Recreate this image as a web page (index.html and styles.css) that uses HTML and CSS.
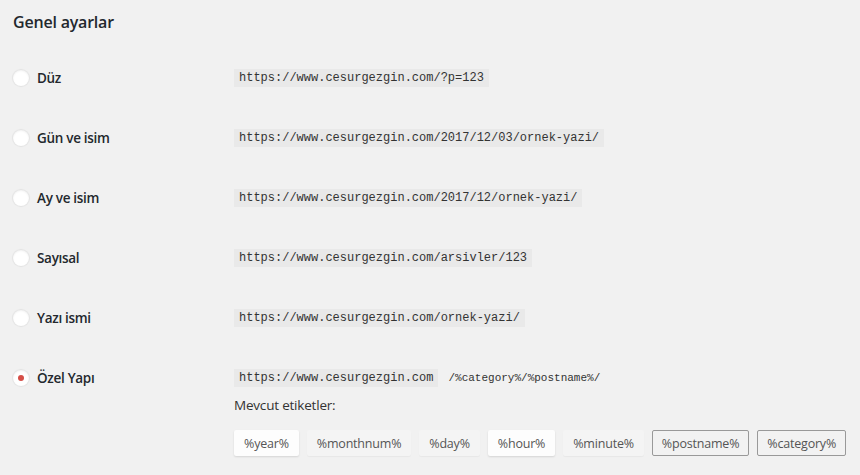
FILE: index.html
```html
<!DOCTYPE html>
<html lang="tr">
<head>
<meta charset="utf-8">
<link rel="stylesheet" href="styles.css">
</head>
<body>
<div class="wrap">
  <h2 class="title">Genel ayarlar</h2>
  <div class="rows">
    <div class="row">
      <label class="opt"><span class="radio"></span>Düz</label>
      <div class="val"><code>https://www.cesurgezgin.com/?p=123</code></div>
    </div>
    <div class="row">
      <label class="opt"><span class="radio"></span>Gün ve isim</label>
      <div class="val"><code>https://www.cesurgezgin.com/2017/12/03/ornek-yazi/</code></div>
    </div>
    <div class="row">
      <label class="opt"><span class="radio"></span>Ay ve isim</label>
      <div class="val"><code>https://www.cesurgezgin.com/2017/12/ornek-yazi/</code></div>
    </div>
    <div class="row">
      <label class="opt"><span class="radio"></span>Sayısal</label>
      <div class="val"><code>https://www.cesurgezgin.com/arsivler/123</code></div>
    </div>
    <div class="row">
      <label class="opt"><span class="radio"></span>Yazı ismi</label>
      <div class="val"><code>https://www.cesurgezgin.com/ornek-yazi/</code></div>
    </div>
    <div class="row">
      <label class="opt"><span class="radio checked"></span>Özel Yapı</label>
      <div class="val-custom">
        <div class="val"><code>https://www.cesurgezgin.com</code><span class="struct">/%category%/%postname%/</span></div>
        <p class="avail">Mevcut etiketler:</p>
        <div class="tags">
          <button class="tag light">%year%</button>
          <button class="tag">%monthnum%</button>
          <button class="tag">%day%</button>
          <button class="tag light">%hour%</button>
          <button class="tag">%minute%</button>
          <button class="tag active">%postname%</button>
          <button class="tag active">%category%</button>
        </div>
      </div>
    </div>
  </div>
</div>
</body>
</html>
```

FILE: styles.css
```css
html, body {
  margin: 0;
  padding: 0;
  background: #f1f1f1;
}
body {
  font-family: "Open Sans", "Noto Sans", sans-serif;
  color: #23282d;
  font-size: 13px;
}
.wrap {
  padding: 0 10px 0 13px;
}
.title {
  margin: 0;
  padding-top: 11px;
  height: 37px;
  font-size: 16px;
  line-height: 22px;
  font-weight: 600;
  letter-spacing: -0.2px;
}
.row {
  display: grid;
  grid-template-columns: 221px 1fr;
  padding: 20px 0;
  align-items: start;
}
.opt {
  display: flex;
  align-items: center;
  height: 20px;
  font-size: 13.5px;
  font-weight: 600;
  letter-spacing: -0.3px;
}
.radio {
  width: 16px;
  height: 16px;
  border-radius: 50%;
  background: #fff;
  box-shadow: 0 0 1px 1px rgba(0,0,0,0.06), inset 0 1px 2px rgba(0,0,0,0.06);
  margin-right: 8px;
  position: relative;
  flex: none;
}
.radio.checked::after {
  content: "";
  position: absolute;
  left: 5px;
  top: 5px;
  width: 6px;
  height: 6px;
  border-radius: 50%;
  background: #d54e47;
}
.val {
  height: 20px;
  display: flex;
  align-items: center;
}
code {
  font-family: "Liberation Mono", "DejaVu Sans Mono", monospace;
  font-size: 12px;
  line-height: 16px;
  color: #333;
  background: rgba(0,0,0,0.03);
  padding: 1px 5px;
}
.struct {
  font-family: "Liberation Mono", "DejaVu Sans Mono", monospace;
  font-size: 11px;
  color: #333;
  margin-left: 10px;
}
.avail {
  margin: 7px 0 0;
  font-size: 13.5px;
  line-height: 20px;
  color: #333;
  letter-spacing: -0.2px;
}
.tags {
  display: flex;
  gap: 8px;
  margin-top: 15px;
}
.tag {
  font-family: "Open Sans", "Noto Sans", sans-serif;
  font-size: 12.5px;
  color: #555;
  height: 26px;
  padding: 0 9px;
  border: 1px solid transparent;
  border-radius: 2px;
  background: #f4f4f4;
  box-shadow: 0 1px 1px rgba(0,0,0,0.04);
  letter-spacing: -0.2px;
}
.tag.light {
  background: #fdfdfd;
  box-shadow: 0 1px 2px rgba(0,0,0,0.12);
}
.tag.active {
  border-color: #999;
  background: #f2f2f2;
  box-shadow: none;
}
```
